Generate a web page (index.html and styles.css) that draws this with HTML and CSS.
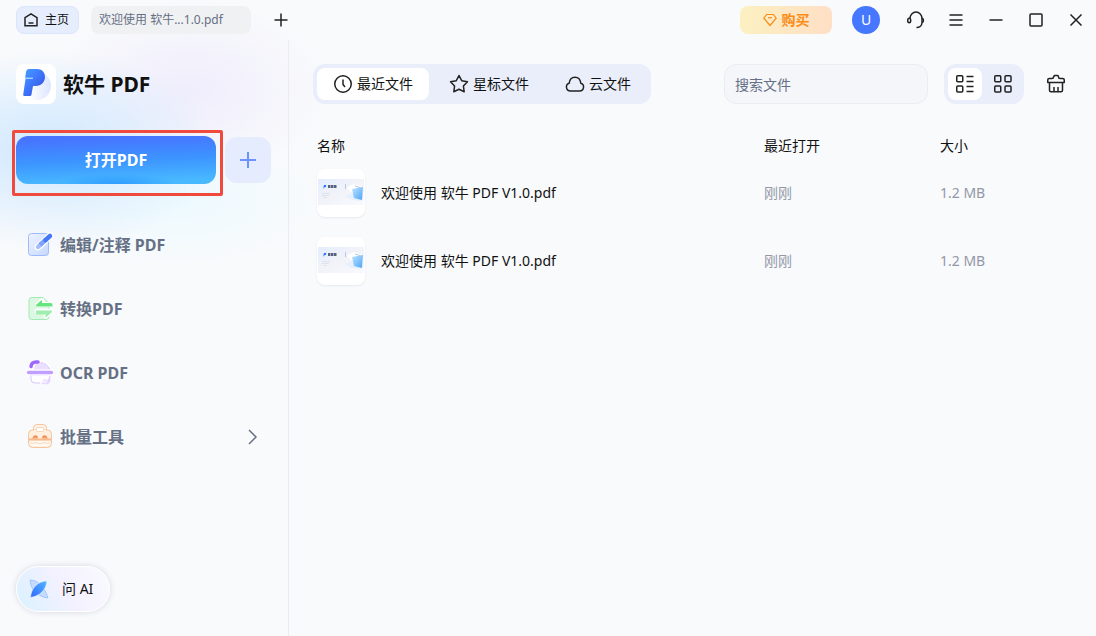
FILE: index.html
```html
<!DOCTYPE html>
<html lang="zh-CN">
<head>
	<meta charset="utf-8">
	<meta name="viewport" content="width=device-width, initial-scale=1">
	<title>软牛 PDF</title>
	<link rel="stylesheet" href="styles.css">
</head>
<body>
	<header class="titlebar">
		<button class="tab tab-home" type="button">
			<svg width="16" height="16" viewBox="0 0 16 16"><path d="M2 5.6 8 1.8l6 3.8v8.2H2z"/><path d="M5.5 11h5"/></svg>
			主页
		</button>
		<button class="tab tab-file" type="button">欢迎使用 软牛...1.0.pdf</button>
		<button class="icon-button tab-add" type="button" aria-label="新建标签">
			<svg width="14" height="14" viewBox="0 0 14 14"><path d="M7 0.5v13M0.5 7h13"/></svg>
		</button>
		<div class="account">
			<button class="buy" type="button">
				<svg width="14" height="14" viewBox="0 0 14 14"><path d="M3.6 1.5h6.8L13.2 5.2 7 12.5 0.8 5.2z"/><path d="M5 4.7h4"/></svg>
				购买
			</button>
			<button class="avatar" type="button">U</button>
		</div>
		<div class="window-buttons">
			<button class="icon-button" type="button" aria-label="客服">
				<svg width="20" height="20" viewBox="0 0 20 20"><path d="M4 8.500a6 6.500 0 0 1 12 0v4c0 3-2.500 5-5.500 5"/><ellipse cx="3.200" cy="10.500" rx="1.500" ry="2.200"/><path d="M16 8.300a2.300 2.300 0 0 1 0 4.300"/></svg>
			</button>
			<button class="icon-button" type="button" aria-label="菜单">
				<svg width="14" height="14" viewBox="0 0 14 14"><path d="M0.500 2h13M0.500 7h13M0.500 12h13"/></svg>
			</button>
			<button class="icon-button" type="button" aria-label="最小化">
				<svg width="14" height="14" viewBox="0 0 14 14"><path d="M0.500 7h13"/></svg>
			</button>
			<button class="icon-button" type="button" aria-label="最大化">
				<svg width="14" height="14" viewBox="0 0 14 14"><rect x="1" y="1" width="12" height="12" rx="1"/></svg>
			</button>
			<button class="icon-button" type="button" aria-label="关闭">
				<svg width="14" height="14" viewBox="0 0 14 14"><path d="M1.500 1.500l11 11M12.500 1.500l-11 11"/></svg>
			</button>
		</div>
	</header>

	<div class="layout">
		<aside class="sidebar">
			<h1 class="brand">
				<svg class="brand-logo" width="40" height="40" viewBox="0 0 40 40">
					<defs>
						<linearGradient id="logo" x1="0" y1="0" x2="1" y2="1"><stop offset="0" stop-color="#45a4ff"/><stop offset=".4" stop-color="#3f7cff"/><stop offset=".7" stop-color="#3a62ea"/><stop offset="1" stop-color="#3f7cff"/></linearGradient>
						<linearGradient id="disc" x1="0" y1="0" x2="1" y2="0"><stop offset=".2" stop-color="#fff"/><stop offset="1" stop-color="#dde6ff"/></linearGradient>
					</defs>
					<circle cx="21" cy="22" r="14" fill="url(#disc)"/>
					<path d="M13 5h8c5 0 8 3.500 8 8 0 5-4 9-9 9h-3l-1.500 8.500q-.3 1.500-1.500 1.500H8.500Q7 32 7.200 30.500L9.500 15H9l1-7q.5-3 3-3z" fill="url(#logo)"/>
					<path d="M9 14.200h8" stroke="#d9eaff"/>
				</svg>
				软牛 PDF
			</h1>

			<div class="open-row">
				<div class="highlight">
					<button class="open" type="button">打开PDF</button>
				</div>
				<button class="create" type="button" aria-label="新建">
					<svg width="16" height="16" viewBox="0 0 16 16"><path d="M8 0v16M0 8h16"/></svg>
				</button>
			</div>

			<nav class="menu">
				<a class="menu-item" href="#edit">
					<svg width="28" height="28" viewBox="0 0 28 28">
						<defs><linearGradient id="edit" x1="0" y1="0" x2="1" y2="1"><stop offset="0" stop-color="#eef3ff"/><stop offset="1" stop-color="#c6d8ff"/></linearGradient></defs>
						<rect x="2.500" y="2.500" width="20" height="22" rx="3" fill="url(#edit)" stroke="#9dbbfc"/>
						<path d="M12 16 24 5" stroke="#fff" stroke-width="7" stroke-linecap="round"/>
						<path d="M12 16 15 13" stroke="#a4befd" stroke-width="4.500" stroke-linecap="round"/>
						<path d="M14 14 20 8.500" stroke="#7ea2fb" stroke-width="4.500"/>
						<path d="M19.500 9 24 5" stroke="#4577fb" stroke-width="4.500" stroke-linecap="round"/>
					</svg>
					编辑/注释 PDF
				</a>
				<a class="menu-item" href="#convert">
					<svg width="28" height="28" viewBox="0 0 28 28">
						<path d="M6 2.500h11l6 6v13a3 3 0 0 1-3 3H6a3 3 0 0 1-3-3v-16a3 3 0 0 1 3-3z" fill="#dcf8e3" stroke="#a2e9b5"/>
						<path d="M12 9.500 16 6v3.500h9M11 16h14l-5 5v-5" stroke="#fff" stroke-width="5" stroke-linejoin="round" stroke-linecap="round"/>
						<path d="M10 10.500q0-.6.500-1l4.500-4q1-.8 1 .5v2h9a1.500 1.500 0 0 1 1.500 1.500v2H11q-1 0-1-1z" fill="#68e47f"/>
						<path d="M26 16v.5q0 .6-.5 1l-5 4.500q-1 .8-1-.5v-2h-8A1.500 1.500 0 0 1 10 18v-2.500h15.500z" fill="#a0edb0"/>
					</svg>
					转换PDF
				</a>
				<a class="menu-item" href="#ocr">
					<svg width="28" height="28" viewBox="0 0 28 28">
						<path d="M3 12V7a6 6 0 0 1 6-6h6a10 10 0 0 1 10 10v1z" fill="#fff"/>
						<path d="M12 3.500c7 0 11 3 12 8.500H8c0-5 1-7 4-8.500z" fill="#eadfff"/>
						<path d="M15 3.500q7 1 9 8" stroke="#d3bdff" stroke-dasharray="2 1"/>
						<path d="M5 7.500Q5.500 3 10 3h2" stroke="#9c69fb" stroke-width="3.500" stroke-linecap="round"/>
						<path d="M5 16h19v3q0 5-5 5h-10q-4 0-4-4z" fill="#fff" stroke="#d9c5ff"/>
						<path d="M25 16v4q0 6-6 6-4 0-5-2 8 0 9-8z" fill="#e4d5ff" stroke="#fff"/>
						<circle cx="19" cy="22" r="2.500" fill="#f1e9ff"/>
						<path d="M2.500 13.500h23" stroke="#fff" stroke-width="6" stroke-linecap="round"/>
						<path d="M2.500 13.500h23" stroke="#c0a0ff" stroke-width="3.500" stroke-linecap="round"/>
					</svg>
					OCR PDF
				</a>
				<a class="menu-item" href="#batch">
					<svg width="28" height="28" viewBox="0 0 28 28">
						<path d="M7.500 8V5q0-3.500 3.500-3.500h6q3.500 0 3.500 3.500v3" fill="#fff2e4" stroke="#f4c6a0"/>
						<rect x="2.500" y="7" width="23" height="17.500" rx="4" fill="#ffefdf" stroke="#f4c6a0"/>
						<path d="M8 7.500h12" stroke="#ffefdf" stroke-width="2"/>
						<rect x="10.500" y="4.500" width="7" height="4" rx="1" fill="#fff" stroke="#f6d4b7"/>
						<path d="M4 18h20v3q0 2-2 2H6q-2 0-2-2z" fill="#fff9f2"/>
						<path d="M3 15.500h3c1-4 5-4 6 0h4c1-4 5-4 6 0h3v2H3z" fill="#f7b98b"/>
						<path d="M7 14.500q0-2 2-2h1q2 0 2 2zM16 14.500q0-2 2-2h1q2 0 2 2z" fill="#ee8b54"/>
						<path d="M4 19.500q3 2 6 0l2 1h4l2-1q3 2 6 0" stroke="#f6dac3"/>
					</svg>
					批量工具
					<svg class="chevron" width="10" height="16" viewBox="0 0 10 16"><path d="M1 1l7 7-7 7"/></svg>
				</a>
			</nav>

			<button class="ask-ai" type="button">
				<svg width="20" height="20" viewBox="0 0 20 20">
					<defs><linearGradient id="ai" x1="0" y1="1" x2="1" y2="0"><stop offset="0" stop-color="#2f66ff"/><stop offset="1" stop-color="#55b7ff"/></linearGradient></defs>
					<path d="M1 1c7 0 14 5 18 18C11 18 2 13 1 1z" fill="#c5dcff" stroke="#7fb2f8" stroke-width=".6"/>
					<path d="M1.500 18.500C2 9 9 2 18 2 17 11 11 17 1.500 18.500z" fill="url(#ai)" stroke="#eef6ff" stroke-width=".6"/>
				</svg>
				问 AI
			</button>
		</aside>

		<main class="content">
			<div class="toolbar">
				<div class="filters">
					<button class="filter filter-active" type="button">
						<svg width="20" height="20" viewBox="0 0 20 20"><circle cx="10" cy="10" r="8.250"/><path d="M10 5.500v5l2 2.500"/></svg>
						最近文件
					</button>
					<button class="filter" type="button">
						<svg width="20" height="20" viewBox="0 0 20 20"><path d="M10 1.500l2.700 5.200 5.800 1-4.100 4.200.8 5.900L10 15.300l-5.200 2.500.8-5.900L1.500 7.700l5.800-1z"/></svg>
						星标文件
					</button>
					<button class="filter" type="button">
						<svg width="20" height="20" viewBox="0 0 20 20"><path d="M5.500 17h9a4 4 0 0 0 1.300-7.800C15.400 5.500 13 3.200 10 3.200S4.600 5.500 4.200 9.200A4 4 0 0 0 5.500 17z"/></svg>
						云文件
					</button>
				</div>
				<input class="search" type="search" placeholder="搜索文件" aria-label="搜索文件">
				<div class="views">
					<button class="view view-active" type="button" aria-label="列表视图">
						<svg width="20" height="20" viewBox="0 0 20 20"><rect x="1.750" y="1.750" width="6" height="6" rx="1"/><rect x="1.750" y="12" width="6" height="6" rx="1"/><path d="M11.500 2.500h7M11.500 7.500h7M11.500 12.500h7M11.500 17.500h7"/></svg>
					</button>
					<button class="view" type="button" aria-label="网格视图">
						<svg width="20" height="20" viewBox="0 0 20 20"><rect x="1.750" y="1.750" width="6" height="6" rx="1"/><rect x="12" y="1.750" width="6" height="6" rx="1"/><rect x="1.750" y="12" width="6" height="6" rx="1"/><rect x="12" y="12" width="6" height="6" rx="1"/></svg>
					</button>
				</div>
				<button class="clean" type="button" aria-label="清理">
					<svg width="20" height="20" viewBox="0 0 20 20"><path d="M1.750 8.500V6q0-1.500 1.500-1.500H6c1 0 1.500-.5 1.500-1.500T8.500 1.500h3q1 0 1 1.500T14 4.500h2.750q1.500 0 1.500 1.500v2.500zM3.500 8.500v7.750q0 1.500 1.500 1.500h10q1.500 0 1.500-1.500V8.500M8 13v4.500M12 13v4.500"/></svg>
				</button>
			</div>

			<table class="files">
				<colgroup>
					<col>
					<col class="col-opened">
					<col class="col-size">
				</colgroup>
				<thead>
					<tr><th>名称</th><th>最近打开</th><th>大小</th></tr>
				</thead>
				<tbody>
					<tr>
						<td>
							<a class="file" href="#file-1">
								<svg class="thumb" width="48" height="48" viewBox="0 0 48 48">
									<defs>
										<linearGradient id="page" x1="0" y1="0" x2="1" y2="1"><stop offset="0" stop-color="#e3edff"/><stop offset=".5" stop-color="#f2f3f8"/><stop offset="1" stop-color="#f8faff"/></linearGradient>
										<linearGradient id="card" x1="0" y1="0" x2="1" y2="1"><stop offset="0" stop-color="#bfe4ff"/><stop offset="1" stop-color="#4ca5fa"/></linearGradient>
										<g id="preview">
											<rect x="1" y="10" width="46" height="26" fill="url(#page)"/>
											<path d="M6 20l1-4h2q1 2-2 2.500z" fill="#2e75fb"/>
											<path d="M11 17.500h9" stroke="#56647e" stroke-width="3" stroke-dasharray="2.500 .5"/>
											<path d="M5 24.500h8M5 26.500h7M6 28.500h4" stroke="#dfe2e9"/>
											<path d="M30 19l6-4 10 3v6l-12-1z" fill="#fff"/>
											<path d="M28 27l8-3 9 8-10-1z" fill="#e6effc"/>
											<path d="M35 20l11-2-1 13-8-2z" fill="url(#card)"/>
											<path d="M28.500 15v5M38 17l6 2" stroke="#b5c9e7"/>
										</g>
									</defs>
									<use href="#preview"/>
								</svg>
								欢迎使用 软牛 PDF V1.0.pdf
							</a>
						</td>
						<td>刚刚</td>
						<td>1.2 MB</td>
					</tr>
					<tr>
						<td>
							<a class="file" href="#file-2">
								<svg class="thumb" width="48" height="48" viewBox="0 0 48 48"><use href="#preview"/></svg>
								欢迎使用 软牛 PDF V1.0.pdf
							</a>
						</td>
						<td>刚刚</td>
						<td>1.2 MB</td>
					</tr>
				</tbody>
			</table>
		</main>
	</div>
</body>
</html>
```
FILE: styles.css
```css
* {
	box-sizing: border-box;
}

body {
	margin: 0;
	min-height: 100vh;
	display: flex;
	flex-direction: column;
	font-family: "Noto Sans", "Noto Sans CJK SC", sans-serif;
	font-size: 14px;
	line-height: 20px;
	color: #111;
	background:
		radial-gradient(ellipse 170px 100px at 50px 150px, rgba(200, 229, 255, 0.9), rgba(200, 229, 255, 0)),
		radial-gradient(ellipse 140px 90px at 190px 90px, rgba(237, 234, 252, 0.8), rgba(237, 234, 252, 0)),
		radial-gradient(ellipse 150px 70px at 180px 200px, rgba(236, 250, 255, 0.9), rgba(236, 250, 255, 0)),
		#f9fafc;
}

button,
input {
	margin: 0;
	padding: 0;
	border: 0;
	font: inherit;
	color: inherit;
	background: none;
}

a {
	color: inherit;
	text-decoration: none;
}

svg {
	flex: none;
	fill: none;
}

/* title bar */
.titlebar {
	display: flex;
	align-items: center;
	height: 40px;
}

.titlebar svg {
	stroke: #222;
	stroke-width: 1.5;
}

.tab {
	height: 28px;
	border-radius: 8px;
	font-size: 12px;
	white-space: nowrap;
}

.tab-home {
	display: flex;
	align-items: center;
	gap: 6px;
	margin-left: 16px;
	padding: 0 9px 0 6px;
	border: 1px solid #dbe5fc;
	background: #e6edfd;
}

.tab-file {
	width: 160px;
	margin-left: 12px;
	padding: 0 8px;
	text-align: left;
	color: #667085;
	background: #f0f1f3;
}

.icon-button {
	display: flex;
	align-items: center;
	justify-content: center;
	width: 40px;
	height: 40px;
}

.tab-add {
	margin-left: 10px;
}

.account {
	display: flex;
	gap: 20px;
	margin-left: auto;
}

.buy {
	display: flex;
	align-items: center;
	justify-content: center;
	gap: 5px;
	width: 92px;
	height: 28px;
	border-radius: 8px;
	font-weight: bold;
	color: #fa8c16;
	background: linear-gradient(90deg, #fbf0c1, #ffdfc5);
}

.buy svg {
	stroke: #fa8c16;
	stroke-width: 1.2;
}

.avatar {
	width: 28px;
	height: 28px;
	border-radius: 50%;
	color: #fff;
	background: #4678ff;
}

.window-buttons {
	display: flex;
	margin-left: 16px;
}

.layout {
	flex: 1;
	display: flex;
}

/* sidebar */
.sidebar {
	display: flex;
	flex-direction: column;
	width: 289px;
	padding: 24px 16px;
	border-right: 1px solid #e9edf3;
}

.brand {
	display: flex;
	align-items: center;
	gap: 7px;
	margin: 0;
	font-size: 21px;
	line-height: 40px;
}

.brand-logo {
	border-radius: 8px;
	background: #fff;
}

.open-row {
	display: flex;
	align-items: center;
	gap: 9px;
	margin-top: 32px;
}

.highlight {
	position: relative;
}

.highlight::after {
	content: "";
	position: absolute;
	inset: -6px -7px -12px -4px;
	border: 3px solid #f04a3e;
	border-radius: 2px;
	pointer-events: none;
}

.open {
	display: block;
	width: 200px;
	height: 48px;
	border-radius: 12px;
	font-size: 16px;
	font-weight: bold;
	color: #fff;
	background:
		radial-gradient(ellipse 60px 10px at 50% 100%, rgba(40, 150, 255, 0.8), rgba(40, 150, 255, 0)),
		linear-gradient(178deg, #4774ff 8%, #3c94ff 50%, #48b8ff 90%);
}

.create {
	display: flex;
	align-items: center;
	justify-content: center;
	width: 46px;
	height: 46px;
	border-radius: 12px;
	background: #e4ecfd;
}

.create svg {
	stroke: #6d92fb;
	stroke-width: 2;
}

.menu {
	display: grid;
	gap: 24px;
	margin-top: 41px;
}

.menu-item {
	display: flex;
	align-items: center;
	gap: 6px;
	height: 40px;
	padding: 0 14px 0 10px;
	font-size: 16px;
	font-weight: bold;
	color: #667085;
}

.chevron {
	margin-left: auto;
	stroke: #667085;
	stroke-width: 1.5;
}

.ask-ai {
	display: flex;
	align-items: center;
	gap: 13px;
	width: 94px;
	height: 46px;
	margin-top: auto;
	padding: 0 12px;
	border: 1px solid #fff;
	border-radius: 23px;
	background: linear-gradient(60deg, #d9f1ff, #f3f1ff 50%, #fafaff);
	box-shadow: 0 0 6px rgba(30, 40, 70, 0.16);
}

/* file list */
.content {
	flex: 1;
	padding: 24px;
}

.toolbar {
	display: flex;
	align-items: center;
}

.toolbar svg {
	stroke: #222;
	stroke-width: 1.5;
	stroke-linejoin: round;
}

.filters,
.views {
	display: flex;
	gap: 4px;
	padding: 4px;
	border-radius: 12px;
	background: #e9eefa;
}

.filter {
	display: flex;
	align-items: center;
	gap: 4px;
	height: 32px;
	padding: 0 16px;
	border-radius: 8px;
	white-space: nowrap;
}

.filter-active,
.view-active {
	background: #fff;
}

.search {
	width: 204px;
	height: 40px;
	margin-left: auto;
	padding: 0 10px;
	border: 1px solid #e9edf3;
	border-radius: 12px;
	background: #f5f6fa;
}

.search::placeholder {
	color: #667085;
	opacity: 1;
}

.views {
	margin-left: 16px;
}

.view {
	display: flex;
	align-items: center;
	justify-content: center;
	width: 34px;
	height: 32px;
	border-radius: 8px;
}

.clean {
	display: flex;
	align-items: center;
	justify-content: center;
	width: 32px;
	height: 32px;
	margin-left: 16px;
}

.files {
	width: 100%;
	margin-top: 28px;
	border-collapse: collapse;
	table-layout: fixed;
}

.col-opened {
	width: 176px;
}

.col-size {
	width: 132px;
}

.files th {
	height: 27px;
	padding: 0;
	text-align: left;
	font-weight: normal;
}

.files td {
	height: 68px;
	padding: 0;
	color: #9298a8;
}

.files th:first-child,
.files td:first-child {
	padding-left: 4px;
}

.file {
	display: flex;
	align-items: center;
	gap: 16px;
	color: #111;
}

.thumb {
	border-radius: 8px;
	background: #fff;
	box-shadow: 0 1px 2px rgba(30, 40, 70, 0.08);
}
```
